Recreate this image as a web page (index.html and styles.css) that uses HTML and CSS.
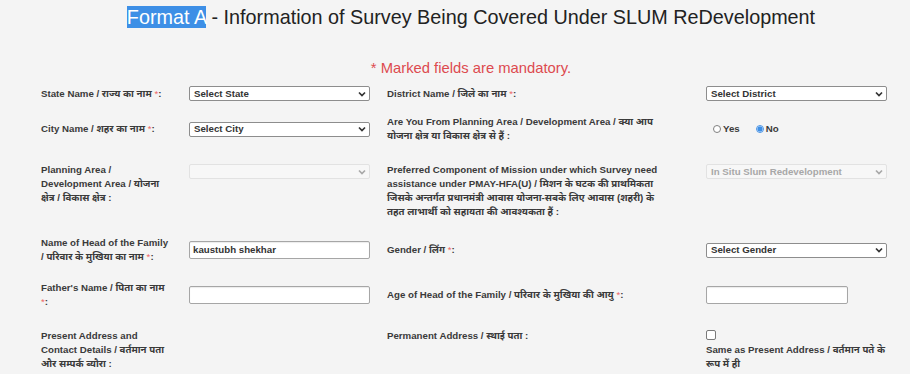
FILE: index.html
```html
<!DOCTYPE html>
<html lang="en">
<head>
<meta charset="utf-8">
<title>Format A</title>
<link rel="stylesheet" href="styles.css">
</head>
<body>
<div class="page">
  <h1 class="title"><span class="hl">Format A</span> - Information of Survey Being Covered Under SLUM ReDevelopment</h1>
  <p class="note">* Marked fields are mandatory.</p>

  <div class="form">
    <div class="row row-1 mid">
      <div class="label">State Name / राज्य का नाम <span class="req">*</span>:</div>
      <div class="select"><span>Select State</span><svg class="chev" width="8" height="6" viewBox="0 0 8 6"><path d="M1 1.5l3 3 3-3"/></svg></div>
      <div class="label">District Name / जिले का नाम <span class="req">*</span>:</div>
      <div class="select"><span>Select District</span><svg class="chev" width="8" height="6" viewBox="0 0 8 6"><path d="M1 1.5l3 3 3-3"/></svg></div>
    </div>

    <div class="row row-2 mid">
      <div class="label">City Name / शहर का नाम <span class="req">*</span>:</div>
      <div class="select"><span>Select City</span><svg class="chev" width="8" height="6" viewBox="0 0 8 6"><path d="M1 1.5l3 3 3-3"/></svg></div>
      <div class="label">Are You From Planning Area / Development Area / क्या आप<br>योजना क्षेत्र या विकास क्षेत्र से हैं :</div>
      <div class="radios">
        <span class="radio"></span><span class="rtext">Yes</span>
        <span class="radio on"></span><span class="rtext">No</span>
      </div>
    </div>

    <div class="row row-3 top">
      <div class="label">Planning Area /<br>Development Area / योजना<br>क्षेत्र / विकास क्षेत्र :</div>
      <div class="select off"><span></span><svg class="chev" width="8" height="6" viewBox="0 0 8 6"><path d="M1 1.5l3 3 3-3"/></svg></div>
      <div class="label">Preferred Component of Mission under which Survey need<br>assistance under PMAY-HFA(U) / मिशन के घटक की प्राथमिकता<br>जिसके अन्तर्गत प्रधानमंत्री आवास योजना-सबके लिए आवास (शहरी) के<br>तहत लाभार्थी को सहायता की आवश्यकता हैं :</div>
      <div class="select off"><span>In Situ Slum Redevelopment</span><svg class="chev" width="8" height="6" viewBox="0 0 8 6"><path d="M1 1.5l3 3 3-3"/></svg></div>
    </div>

    <div class="row row-4 mid">
      <div class="label">Name of Head of the Family<br>/ परिवार के मुखिया का नाम <span class="req">*</span>:</div>
      <div class="input">kaustubh shekhar</div>
      <div class="label">Gender / लिंग <span class="req">*</span>:</div>
      <div class="select"><span>Select Gender</span><svg class="chev" width="8" height="6" viewBox="0 0 8 6"><path d="M1 1.5l3 3 3-3"/></svg></div>
    </div>

    <div class="row row-5 mid">
      <div class="label">Father's Name / पिता का नाम<br><span class="req">*</span>:</div>
      <div class="input"></div>
      <div class="label">Age of Head of the Family / परिवार के मुखिया की आयु <span class="req">*</span>:</div>
      <div class="input short"></div>
    </div>

    <div class="row row-6 top">
      <div class="label">Present Address and<br>Contact Details / वर्तमान पता<br>और सम्पर्क ब्यौरा :</div>
      <div></div>
      <div class="label">Permanent Address / स्थाई पता :</div>
      <div class="same">
        <span class="check"></span>
        <div class="label">Same as Present Address / वर्तमान पते के<br>रूप में ही</div>
      </div>
    </div>
  </div>
</div>
</body>
</html>
```

FILE: styles.css
```css
body {
  margin: 0;
  background: #f4f4f4;
  font-family: "Liberation Sans", Arial, "Noto Sans Devanagari", "Lohit Devanagari", "FreeSans", sans-serif;
  color: #333;
}

.page {
  padding-left: 32px;
}

.title {
  margin: 0;
  padding-top: 6px;
  font-size: 19.8px;
  font-weight: normal;
  line-height: 22px;
  text-align: center;
  color: #222;
}

.hl {
  background: #3d8fe6;
  color: #fff;
}

.note {
  margin: 32px 0 0;
  font-size: 14.8px;
  line-height: 16px;
  text-align: center;
  color: #dd4a4f;
}

.form {
  margin-top: 10px;
  padding-left: 9px;
  display: flex;
  flex-direction: column;
}

.row {
  display: grid;
  grid-template-columns: 148px 198px 319px 180px;
  font-size: 9.7px;
  font-weight: bold;
  line-height: 14px;
}

.row.mid { align-items: center; }
.row.top { align-items: start; }

.row-1 { height: 15px; }
.row-2 { margin-top: 14px; height: 28px; }
.row-3 { margin-top: 20px; }
.row-4 { margin-top: 17px; height: 28px; }
.row-5 { margin-top: 17px; height: 28px; }
.row-6 { margin-top: 20px; }

.label {
  color: #3a3a3a;
}

.req {
  color: #e66;
  font-weight: normal;
}

.select {
  box-sizing: border-box;
  width: 181px;
  height: 15px;
  display: flex;
  align-items: center;
  justify-content: space-between;
  padding: 0 3px 0 4px;
  background: #fff;
  border: 1px solid #8d8d8d;
  border-radius: 2px;
  color: #333;
}

.chev path {
  fill: none;
  stroke: #333;
  stroke-width: 1.7;
}

.row-3 .select {
  margin-top: 1px;
}

.select.off {
  background: #f7f7f7;
  border-color: #e2e2e2;
  color: #a8a8a8;
}

.select.off .chev path {
  stroke: #a8a8a8;
}

.input {
  box-sizing: border-box;
  width: 181px;
  height: 18px;
  padding: 0 3px;
  background: #fff;
  border: 1px solid #a6a6a6;
  border-radius: 2px;
  box-shadow: inset 0 1px 1px rgba(0, 0, 0, 0.08);
  line-height: 16px;
  color: #333;
}

.input.short {
  width: 142px;
}

.radios {
  display: flex;
  align-items: center;
  padding-left: 7px;
}

.radio {
  box-sizing: border-box;
  width: 8px;
  height: 8px;
  border-radius: 50%;
  border: 1px solid #808080;
  background: #fff;
}

.radio.on {
  border-color: #4a94e6;
  background: radial-gradient(circle, #3d8fe6 0 2.2px, #cfe2f8 2.8px);
}

.rtext {
  margin-left: 2px;
  margin-right: 16px;
  color: #3a3a3a;
}

.same {
  display: flex;
  flex-direction: column;
  align-items: flex-start;
}

.check {
  box-sizing: border-box;
  width: 10px;
  height: 10px;
  margin-top: 1px;
  margin-bottom: 3px;
  border: 1px solid #7a7a7a;
  border-radius: 2px;
  background: #fff;
}
```
